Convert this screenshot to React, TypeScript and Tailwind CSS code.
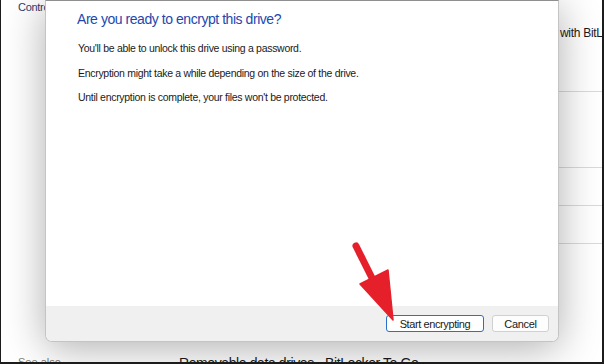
import React from 'react';

const App: React.FC = () => {
  return (
    <div className="relative w-[604px] h-[364px] overflow-hidden bg-white border-l border-r-2 border-b-2 border-[#1c1c1c] font-['Liberation_Sans',Arial,sans-serif] text-[#1a1a1a]">
      {/* Background: BitLocker control panel page */}
      <div className="flex h-full">
        <div className="w-[169px] flex flex-col justify-between pl-[17px]">
          <div className="text-[11px] leading-[14px] tracking-[-0.3px] text-[#2b3c70] whitespace-nowrap">Control Panel Home</div>
          <div className="text-[11px] leading-[14px] text-[#7a7a7a] mb-[-7px]">See also</div>
        </div>
        <div className="flex-1 min-w-0 flex flex-col overflow-hidden">
          <div className="h-[92px] border-b border-[#dadada] pt-[26px] pl-[390px] text-[12px] leading-[14px] tracking-[-0.3px] whitespace-nowrap">
            with BitLocker.
          </div>
          <div className="h-[76px] border-b border-[#dadada]" />
          <div className="h-[38px] border-b border-[#dadada]" />
          <div className="h-[38px] border-b border-[#dadada]" />
          <div className="flex-1 flex flex-col justify-end pl-[9px]">
            <div className="text-[14px] leading-[18px] tracking-[-0.4px] whitespace-nowrap mb-[-10px]">
              Removable data drives - BitLocker To Go
            </div>
          </div>
        </div>
      </div>

      {/* Dialog */}
      <div className="absolute left-[44px] top-0 w-[514px] h-[342px] flex flex-col overflow-hidden rounded-b-[7px] border border-[#c4c4c4] border-t-[#8f8f8f] bg-white shadow-[0_6px_42px_rgba(0,0,0,0.32)]">
        <div className="flex-1 pl-[31px] pt-[9px]">
          <h1 className="text-[14px] leading-[18px] tracking-[-0.45px] text-[#2348ad]">
            Are you ready to encrypt this drive?
          </h1>
          <div className="pl-[1px] mt-[8px] text-[10.5px] leading-[24.5px] tracking-[-0.3px]">
            <p>You'll be able to unlock this drive using a password.</p>
            <p>Encryption might take a while depending on the size of the drive.</p>
            <p>Until encryption is complete, your files won't be protected.</p>
          </div>
        </div>
        <div className="h-[35px] bg-[#f0f0f0] flex items-center justify-end gap-[8px] pr-[9px]">
          <button className="w-[98px] h-[17px] rounded-[3px] border-[1.5px] border-[#2a6fc9] bg-white text-[11px] leading-[14px] tracking-[-0.4px] text-[#1a1a1a]">
            Start encrypting
          </button>
          <button className="w-[57px] h-[17px] rounded-[3px] border border-[#d0d0d0] bg-[#fdfdfd] text-[11px] leading-[14px] tracking-[-0.3px] text-[#1a1a1a]">
            Cancel
          </button>
        </div>
      </div>

      {/* Red annotation arrow */}
      <svg className="absolute left-[-1px] top-0 pointer-events-none" width="604" height="364" viewBox="0 0 604 364">
        <line x1="356" y1="246" x2="373" y2="280" stroke="#e5202b" strokeWidth="7" strokeLinecap="round" />
        <polygon points="360,284 388,270 393,320" fill="#e5202b" stroke="#e5202b" strokeWidth="1.5" strokeLinejoin="round" />
      </svg>
    </div>
  );
};

export default App;
